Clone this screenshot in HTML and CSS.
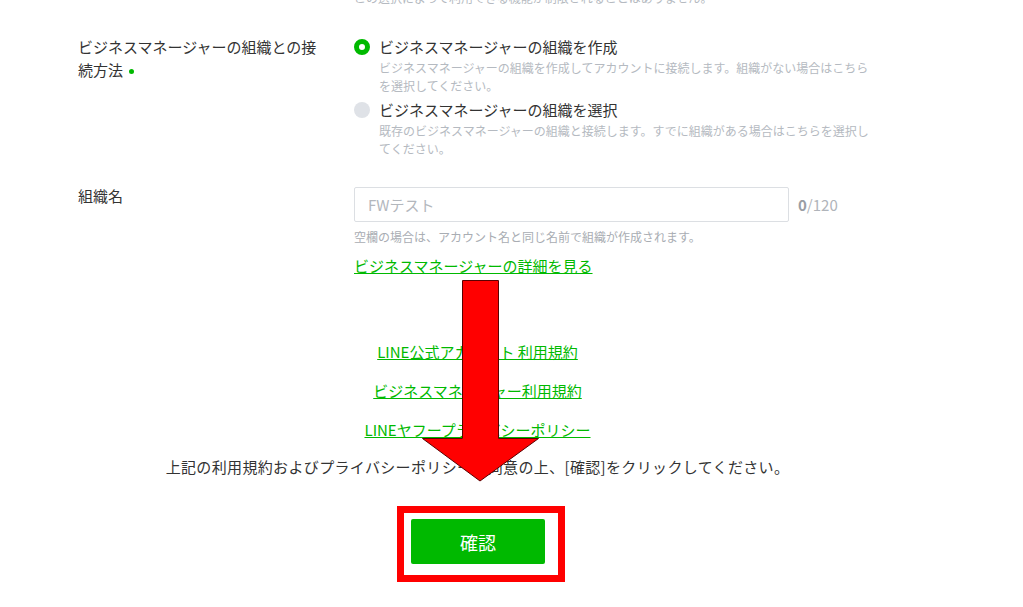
FILE: index.html
```html
<!DOCTYPE html>
<html lang="ja">
<head>
    <meta charset="UTF-8">
    <meta name="viewport" content="width=device-width, initial-scale=1.0">
    <title>ビジネスマネージャーの組織</title>
    <link rel="stylesheet" href="styles.css">
</head>
<body>

    <div class="page">
        <div class="field field-top">
            <div class="field-label"></div>
            <div class="field-body">
                <p class="note">この選択によって利用できる機能が制限されることはありません。</p>
            </div>
        </div>

        <div class="field field-connect">
            <div class="field-label">ビジネスマネージャーの組織との接続方法<span class="required"></span></div>
            <div class="field-body">
                <label class="radio is-checked">
                    <span class="radio-mark"></span>
                    <span class="radio-text">ビジネスマネージャーの組織を作成</span>
                </label>
                <p class="radio-desc">ビジネスマネージャーの組織を作成してアカウントに接続します。組織がない場合はこちらを選択してください。</p>

                <label class="radio">
                    <span class="radio-mark"></span>
                    <span class="radio-text">ビジネスマネージャーの組織を選択</span>
                </label>
                <p class="radio-desc">既存のビジネスマネージャーの組織と接続します。すでに組織がある場合はこちらを選択してください。</p>
            </div>
        </div>

        <div class="field field-name">
            <div class="field-label">組織名</div>
            <div class="field-body">
                <div class="input-row">
                    <input class="text-input" type="text" placeholder="FWテスト">
                    <span class="counter"><b>0</b>/120</span>
                </div>
                <p class="hint">空欄の場合は、アカウント名と同じ名前で組織が作成されます。</p>
                <a class="link detail-link" href="#">ビジネスマネージャーの詳細を見る</a>
            </div>
        </div>

        <div class="agreement">
            <a class="link term-link" href="#">LINE公式アカウント 利用規約</a>
            <a class="link term-link" href="#">ビジネスマネージャー利用規約</a>
            <a class="link term-link" href="#">LINEヤフープライバシーポリシー</a>
            <p class="agree-text">上記の利用規約およびプライバシーポリシーに同意の上、[確認]をクリックしてください。</p>
            <div class="confirm-frame">
                <button class="btn-confirm" type="button">確認</button>
            </div>
        </div>

        <!-- annotation arrow drawn over the page -->
        <svg class="arrow" width="120" height="204" viewBox="0 0 120 204">
            <polygon points="42.5,0.5 78.5,0.5 78.5,158.5 118.5,158.5 60,201 2.5,158.5 42.5,158.5"
                     fill="#ff0000" stroke="#5a0000" stroke-width="1"/>
        </svg>
    </div>

</body>
</html>
```

FILE: styles.css
```css
body {
    margin: 0;
    background-color: #fff;
    color: #333;
    font-family: "Noto Sans CJK JP", "Noto Sans", sans-serif;
    font-size: 15px;
    line-height: 23px;
    overflow: hidden;
}
p {
    margin: 0;
}
.page {
    position: relative;
    display: flow-root;
    width: 955px;
}
.field {
    display: grid;
    grid-template-columns: 276px 521px;
    padding-left: 78px;
}
.field-label {
    padding-right: 30px;
}
.field-top {
    margin-top: -11px;
}
.field-connect {
    margin-top: 28px;
}
.field-name {
    margin-top: 23px;
}
.note,
.radio-desc,
.hint {
    font-size: 12px;
    line-height: 18px;
    color: #b5bac1;
}
.hint {
    color: #a9adb3;
    margin-top: 6px;
}
.required {
    display: inline-block;
    width: 5px;
    height: 5px;
    margin-left: 6px;
    border-radius: 50%;
    background-color: #00b900;
    vertical-align: middle;
}

/* radios */
.radio {
    display: flex;
    align-items: center;
    gap: 9px;
}
.radio-mark {
    width: 16px;
    height: 16px;
    border-radius: 50%;
    background-color: #dfe2e7;
    box-sizing: border-box;
    flex-shrink: 0;
}
.radio.is-checked .radio-mark {
    background-color: #fff;
    border: 5px solid #00b900;
}
.radio + .radio-desc {
    margin-top: 1px;
    margin-bottom: 3px;
    padding-left: 25px;
    width: 496px;
}

/* name input */
.input-row {
    display: flex;
    align-items: center;
    gap: 9px;
    margin-top: 3px;
}
.text-input {
    width: 435px;
    height: 35px;
    box-sizing: border-box;
    padding: 0 13px;
    border: 1px solid #dcdfe3;
    border-radius: 2px;
    font-family: inherit;
    font-size: 15px;
    color: #333;
}
.text-input::placeholder {
    color: #b3b7bd;
}
.counter {
    font-size: 15px;
    color: #b0b4ba;
}
.counter b {
    color: #9a9ea4;
}
.link {
    color: #00b900;
    text-decoration: underline;
}
.detail-link {
    display: inline-block;
    margin-top: 8px;
}

/* agreement */
.agreement {
    display: flex;
    flex-direction: column;
    align-items: center;
    margin-top: 63px;
}
.term-link + .term-link {
    margin-top: 16px;
}
.agree-text {
    margin-top: 14px;
    color: #333;
    letter-spacing: 0.35px;
}
.confirm-frame {
    margin-top: 28px;
    margin-left: 7px;
    padding: 6px 13px 11px 7px;
    border: 7px solid #ff0000;
}
.btn-confirm {
    display: block;
    width: 134px;
    height: 45px;
    border: none;
    border-radius: 2px;
    background-color: #00b900;
    color: #fff;
    font-family: inherit;
    font-size: 18px;
}
.arrow {
    position: absolute;
    left: 420px;
    top: 280px;
}
```
